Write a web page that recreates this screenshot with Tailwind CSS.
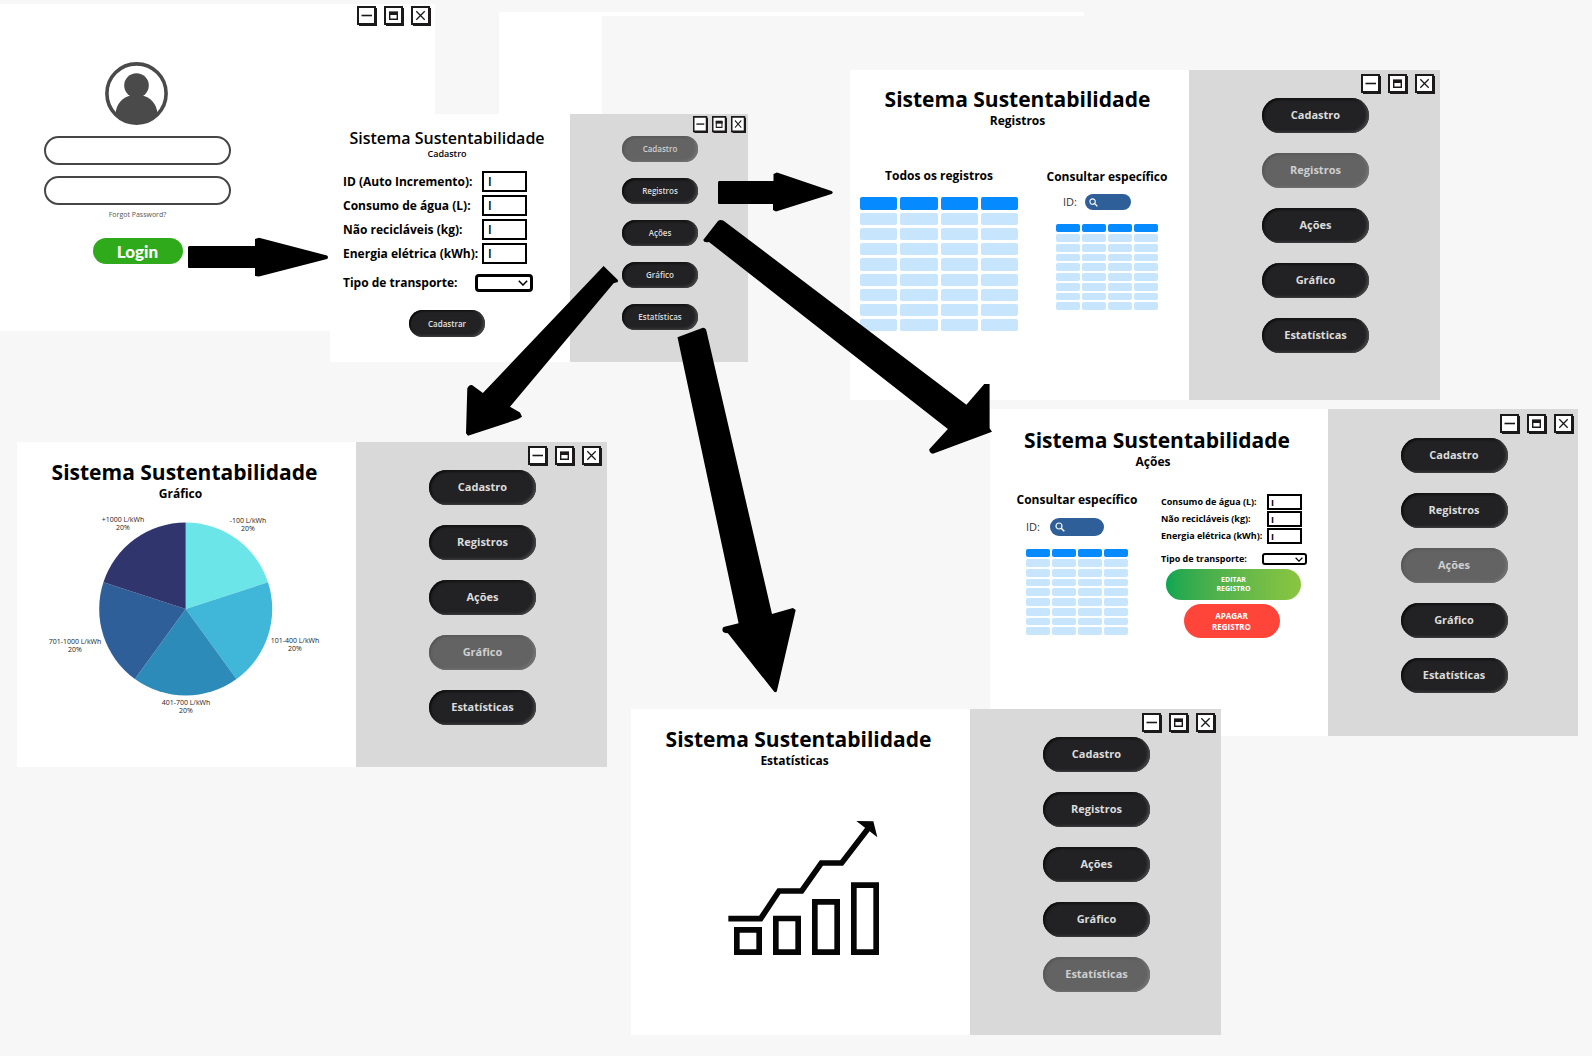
<!DOCTYPE html>
<html lang="pt-BR">
<head>
<meta charset="utf-8">
<meta name="viewport" content="width=device-width, initial-scale=1">
<title>Sistema Sustentabilidade</title>
<script src="https://cdn.jsdelivr.net/npm/@tailwindcss/browser@4"></script>
</head>
<body class="bg-[#f7f7f7] font-['Open_Sans','Noto_Sans',sans-serif] text-black">
<svg class="hidden" aria-hidden="true">
  <symbol id="i-min" viewBox="0 0 20 20" preserveAspectRatio="none"><path d="M2 2H20V20H2z" fill="#1c191b"/><path d="M1 1H18V18H1z" fill="#fff" stroke="#1c191b" stroke-width="2"/><path d="M4.500 9.500H15" stroke="#1c191b" stroke-width="1.600"/></symbol>
  <symbol id="i-max" viewBox="0 0 20 20" preserveAspectRatio="none"><path d="M2 2H20V20H2z" fill="#1c191b"/><path d="M1 1H18V18H1z" fill="#fff" stroke="#1c191b" stroke-width="2"/><path d="M5.700 6.500H13.300V13.300H5.700z" fill="#fff" stroke="#1c191b" stroke-width="1.400"/><path d="M5 5.500H14V9H5z" fill="#1c191b"/></symbol>
  <symbol id="i-close" viewBox="0 0 20 20" preserveAspectRatio="none"><path d="M2 2H20V20H2z" fill="#1c191b"/><path d="M1 1H18V18H1z" fill="#fff" stroke="#1c191b" stroke-width="2"/><path d="M5.300 5.300L13.700 13.700M13.700 5.300L5.300 13.700" stroke="#1c191b" stroke-width="1.300"/></symbol>
  <symbol id="i-search" viewBox="0 0 10 10"><circle cx="4" cy="4" r="3" fill="none" stroke="#fff" stroke-width="1.200"/><path d="M6.200 6.200L9.300 9.300" stroke="#fff" stroke-width="1.500"/></symbol>
  <symbol id="i-chevron" viewBox="0 0 10 6"><path d="M.8.800L5 5L9.200.800" fill="none" stroke="#000" stroke-width="1.500"/></symbol>
</svg>

<main class="relative min-h-screen overflow-hidden">
  <div class="absolute left-[499px] top-3 h-1 w-[585px] bg-white"></div>
  <div class="absolute left-[499px] top-3 h-[104px] w-[103px] bg-white"></div>

  <!-- Login -->
  <section class="absolute left-0 top-1 flex h-[327px] w-[435px] justify-between bg-white">
    <form class="flex w-[275px] flex-col items-center pt-[58px]">
      <svg class="mr-0.5 size-[63px]" viewBox="0 0 63 63" role="img" aria-label="Usuário">
        <clipPath id="face"><circle cx="31.500" cy="31.500" r="30"/></clipPath>
        <g clip-path="url(#face)" fill="#4a4a4a"><circle cx="31.500" cy="23.500" r="12.300"/><path d="M10.500 52C11 42 18 34.500 26 33.500H37C45 34.500 52 42 52.500 52L44 63H19z"/></g>
        <circle cx="31.500" cy="31.500" r="29.600" fill="none" stroke="#4a4a4a" stroke-width="3.600"/>
      </svg>
      <input type="text" aria-label="Usuário" class="mt-[11px] h-[29px] w-[187px] rounded-full border-2 border-[#464646] bg-white px-3 text-xs">
      <input type="password" aria-label="Senha" class="mt-[11px] h-[29px] w-[187px] rounded-full border-2 border-[#464646] bg-white px-3 text-xs">
      <a href="#" class="mt-[5px] text-[7px] leading-[10px] text-[#555]">Forgot Password?</a>
      <button type="button" class="mt-[18px] h-[26px] w-[90px] rounded-full bg-[#2eaa1a] font-['Lato',sans-serif] text-[17px] leading-none font-black text-white">Login</button>
    </form>
    <div data-controls="lg" class="flex gap-[7px] pt-0.5 pr-1"></div>
  </section>

  <!-- Cadastro -->
  <section class="absolute left-[330px] top-[114px] flex h-[248px] w-[418px] bg-white">
    <form class="flex w-[240px] flex-col pt-3.5 pl-[13px]">
      <h1 class="pr-[19px] text-center text-base leading-5 font-semibold">Sistema Sustentabilidade</h1>
      <h2 class="pr-[19px] text-center text-[9px] leading-3 font-semibold">Cadastro</h2>
      <div class="mt-[11px] flex flex-col gap-[3px] text-xs font-bold whitespace-nowrap">
        <div class="flex items-center"><label for="c1" class="w-[139px]">ID (Auto Incremento):</label><input id="c1" value="I" class="h-[21px] w-[45px] border-2 bg-white px-1 font-semibold"></div>
        <div class="flex items-center"><label for="c2" class="w-[139px]">Consumo de água (L):</label><input id="c2" value="I" class="h-[21px] w-[45px] border-2 bg-white px-1 font-semibold"></div>
        <div class="flex items-center"><label for="c3" class="w-[139px]">Não recicláveis (kg):</label><input id="c3" value="I" class="h-[21px] w-[45px] border-2 bg-white px-1 font-semibold"></div>
        <div class="flex items-center"><label for="c4" class="w-[139px]">Energia elétrica (kWh):</label><input id="c4" value="I" class="h-[21px] w-[45px] border-2 bg-white px-1 font-semibold"></div>
      </div>
      <div class="mt-2.5 flex items-center text-xs font-bold whitespace-nowrap">
        <label for="c5" class="w-[132px] leading-[18px]">Tipo de transporte:</label>
        <div class="relative flex"><select id="c5" class="h-[18px] w-[58px] appearance-none rounded-[4px] border-[3px] bg-white"></select><svg class="pointer-events-none absolute top-1.5 right-[5px] h-1.5 w-2.5"><use href="#i-chevron"/></svg></div>
      </div>
      <button type="button" class="mt-[18px] ml-[66px] h-[27px] w-[76px] rounded-full bg-[#222224] text-[8px] font-semibold text-[#e3e3e3] shadow-[inset_-2px_-1px_3px_#48484a,inset_1px_1px_2px_#000]">Cadastrar</button>
    </form>
    <aside class="flex flex-1 flex-col items-center bg-[#d9d9d9]">
      <div data-controls="sm" class="flex gap-1 self-end pt-0.5 pr-0.5"></div>
      <nav data-nav="sm" data-current="Cadastro" class="mt-[3px] flex flex-col gap-4 pl-0.5"></nav>
    </aside>
  </section>

  <!-- Registros -->
  <section class="absolute left-[850px] top-[70px] flex h-[330px] w-[590px] bg-white">
    <div class="w-[339px] pt-[15px]">
      <h1 class="pr-1 text-center text-[21px] leading-7 font-bold">Sistema Sustentabilidade</h1>
      <h2 class="pr-1 text-center text-xs leading-4 font-bold">Registros</h2>
      <div class="mt-[37px] flex gap-6 pl-[7px] whitespace-nowrap">
        <div>
          <h3 class="text-center text-xs leading-5 font-bold">Todos os registros</h3>
          <table data-grid="lg" aria-label="Todos os registros" class="mt-2 h-[140px] w-[164px] table-fixed border-separate border-spacing-[3px]"></table>
        </div>
        <div class="flex w-[124px] flex-col items-center">
          <h3 class="text-xs leading-[22px] font-bold">Consultar específico</h3>
          <div class="mt-1.5 flex items-center gap-2 self-start pl-[18px]">
            <label for="r1" class="text-[11px] leading-4 text-[#333]">ID:</label>
            <div class="relative flex"><input id="r1" type="search" class="h-4 w-[46px] rounded-full bg-[#2f5f98] pl-4 text-[9px] text-white"><svg class="pointer-events-none absolute top-1 left-1 size-[9px]"><use href="#i-search"/></svg></div>
          </div>
          <table data-grid="sm" aria-label="Registro consultado" class="mt-3 h-[90px] w-[106px] table-fixed border-separate border-spacing-[2px]"></table>
        </div>
      </div>
    </div>
    <aside class="flex flex-1 flex-col items-center bg-[#d9d9d9]">
      <div data-controls="lg" class="flex gap-[7px] self-end pt-1 pr-[5px]"></div>
      <nav data-nav="lg" data-current="Registros" class="mt-1 flex flex-col gap-5 pl-0.5"></nav>
    </aside>
  </section>

  <!-- Gráfico -->
  <section class="absolute left-[17px] top-[442px] flex h-[325px] w-[590px] bg-white">
    <div class="w-[339px] pt-4">
      <h1 class="pr-1 text-center text-[21px] leading-7 font-bold">Sistema Sustentabilidade</h1>
      <h2 class="pr-3 text-center text-xs leading-4 font-bold">Gráfico</h2>
      <svg class="h-[250px] w-full" viewBox="17 502 339 250" role="img" aria-label="Distribuição de consumo">
        <path d="M185.700 609V522.500A86.500 86.500 0 0 1 268 582.300z" fill="#6be5e8"/>
        <path d="M185.700 609L268 582.300A86.500 86.500 0 0 1 236.500 679z" fill="#40b7d8"/>
        <path d="M185.700 609L236.500 679A86.500 86.500 0 0 1 134.900 679z" fill="#2d8bba"/>
        <path d="M185.700 609L134.900 679A86.500 86.500 0 0 1 103.400 582.300z" fill="#2f5f98"/>
        <path d="M185.700 609L103.400 582.300A86.500 86.500 0 0 1 185.700 522.500z" fill="#31356e"/>
        <g class="text-[7px]" text-anchor="middle" fill="#222">
          <text x="123" y="522">+1000 L/kWh</text><text x="123" y="530">20%</text>
          <text x="248" y="523">-100 L/kWh</text><text x="248" y="531">20%</text>
          <text x="295" y="643">101-400 L/kWh</text><text x="295" y="651">20%</text>
          <text x="186" y="705">401-700 L/kWh</text><text x="186" y="713">20%</text>
          <text x="75" y="644">701-1000 L/kWh</text><text x="75" y="652">20%</text>
        </g>
      </svg>
    </div>
    <aside class="flex flex-1 flex-col items-center bg-[#d9d9d9]">
      <div data-controls="lg" class="flex gap-[7px] self-end pt-1 pr-[5px]"></div>
      <nav data-nav="lg" data-current="Gráfico" class="mt-1 flex flex-col gap-5 pl-0.5"></nav>
    </aside>
  </section>

  <!-- Ações -->
  <section class="absolute left-[990px] top-[409px] flex h-[327px] w-[588px] bg-white">
    <div class="w-[338px] pt-[17px]">
      <h1 class="pr-1 text-center text-[21px] leading-7 font-bold">Sistema Sustentabilidade</h1>
      <h2 class="pr-3 text-center text-xs leading-4 font-bold">Ações</h2>
      <div class="mt-5 flex gap-[22px] pl-[25px] whitespace-nowrap">
        <div class="flex w-[124px] flex-col items-center">
          <h3 class="text-xs leading-5 font-bold">Consultar específico</h3>
          <div class="mt-2 flex items-center gap-2.5 self-start pl-[11px]">
            <label for="a0" class="text-[11px] leading-4 text-[#333]">ID:</label>
            <div class="relative flex"><input id="a0" type="search" class="h-[18px] w-[54px] rounded-full bg-[#2f5f98] pl-4 text-[9px] text-white"><svg class="pointer-events-none absolute top-1 left-[5px] size-2.5"><use href="#i-search"/></svg></div>
          </div>
          <table data-grid="sm" aria-label="Registro consultado" class="mt-[11px] h-[90px] w-[106px] table-fixed border-separate border-spacing-[2px]"></table>
        </div>
        <form class="w-[146px] pt-1 text-[9px] font-bold">
          <div class="flex flex-col gap-px">
            <div class="flex items-center"><label for="a1" class="w-[106px]">Consumo de água (L):</label><input id="a1" value="I" class="h-4 w-[35px] border-2 bg-white px-0.5 leading-none"></div>
            <div class="flex items-center"><label for="a2" class="w-[106px]">Não recicláveis (kg):</label><input id="a2" value="I" class="h-4 w-[35px] border-2 bg-white px-0.5 leading-none"></div>
            <div class="flex items-center"><label for="a3" class="w-[106px]">Energia elétrica (kWh):</label><input id="a3" value="I" class="h-4 w-[35px] border-2 bg-white px-0.5 leading-none"></div>
          </div>
          <div class="mt-2 flex items-center">
            <label for="a4" class="w-[101px]">Tipo de transporte:</label>
            <div class="relative flex"><select id="a4" class="h-3 w-[45px] appearance-none rounded-[3px] border-2 bg-white"></select><svg class="pointer-events-none absolute top-1 right-1 h-[5px] w-2"><use href="#i-chevron"/></svg></div>
          </div>
          <div class="mt-[3px] flex w-[145px] flex-col items-center gap-1 text-white">
            <button type="button" class="h-[31px] w-[135px] rounded-full bg-linear-to-r from-[#07a651] to-[#8bc540] text-[7px] leading-[9px]">EDITAR<br>REGISTRO</button>
            <button type="button" class="mr-1 h-[34px] w-24 rounded-full bg-[#ff453a] text-[8px] leading-[11px]">APAGAR<br>REGISTRO</button>
          </div>
        </form>
      </div>
    </div>
    <aside class="flex flex-1 flex-col items-center bg-[#d9d9d9]">
      <div data-controls="lg" class="flex gap-[7px] self-end pt-[5px] pr-1"></div>
      <nav data-nav="lg" data-current="Ações" class="mt-1 flex flex-col gap-5 pl-0.5"></nav>
    </aside>
  </section>

  <!-- Estatísticas -->
  <section class="absolute left-[631px] top-[709px] flex h-[326px] w-[590px] bg-white">
    <div class="w-[339px] pt-4">
      <h1 class="pr-1 text-center text-[21px] leading-7 font-bold">Sistema Sustentabilidade</h1>
      <h2 class="pr-3 text-center text-xs leading-4 font-bold">Estatísticas</h2>
      <svg class="mt-[51px] ml-[97px] h-[136px] w-[151px]" viewBox="324 360 453 408" role="img" aria-label="Gráfico em crescimento">
        <g fill="none" stroke="#060606" stroke-width="17">
          <path d="M325 656H422L477 573H545L604 489H665L745 385"/>
          <path d="M350.500 689.500H417.500V756.500H350.500zM467.500 655.500H534.500V756.500H467.500zM584.500 605.500H651.500V756.500H584.500zM701.500 555.500H768.500V756.500H701.500z"/>
        </g>
        <path d="M709 363L760 364L772 412L749 394L736 384z" fill="#060606"/>
      </svg>
    </div>
    <aside class="flex flex-1 flex-col items-center bg-[#d9d9d9]">
      <div data-controls="lg" class="flex gap-[7px] self-end pt-1 pr-[5px]"></div>
      <nav data-nav="lg" data-current="Estatísticas" class="mt-1 flex flex-col gap-5 pl-0.5"></nav>
    </aside>
  </section>

  <!-- Flow arrows between the screens -->
  <svg class="pointer-events-none absolute top-0 left-0 h-[1056px] w-[1592px]" viewBox="0 0 1592 1056" aria-hidden="true">
    <path d="M189 246H255V239L259 237.700L327 255.500Q329 257 327 259L259 276.500L255 276V268H189Q188 268 188 267V247z"/>
    <path d="M719 181H773.500V174L777 172.500L831.500 191Q834 192.500 831.500 194L776 211.500L773 210V204H719Q718 204 718 203V182z"/>
    <path d="M718 221Q720 219 723.600 220.700L966.400 404.700L984.300 384H989.600V428.300L992 431.700L932.900 453.700Q929 453 929.300 449.300L947.900 429L709 242Q704 243 703.200 240z"/>
    <path d="M603.600 266L617.900 280V282L613.600 283.300L510 406.700L520 412.500L522 416.700L517.900 419.300L468 435.700L466 433.300L467.300 388.300Q469 384.500 472 385L482.900 393z"/>
    <path d="M677.500 337.300L702.900 327.700Q706 328 706.400 330.700L772 614L792.900 608L795.700 610L776.800 691.500Q775 693 774 691.500L727.900 633.300Q723 633 722.500 630.700Q722 627 724.500 626.700L738.600 623.300z"/>
  </svg>
</main>

<script>
const controls = {
  lg: 'block size-5',
  sm: 'block h-[17px] w-[15px]',
};
for (const bar of document.querySelectorAll('[data-controls]')) {
  bar.innerHTML = [['min', 'Minimizar'], ['max', 'Maximizar'], ['close', 'Fechar']]
    .map(([id, name]) => `<button type="button" aria-label="${name}" class="self-start"><svg class="${controls[bar.dataset.controls]}"><use href="#i-${id}"/></svg></button>`)
    .join('');
}
const size = {
  lg: 'h-[35px] w-[107px] text-[11px] font-bold',
  sm: 'h-[26px] w-[76px] text-[8px] font-semibold',
};
const idle = 'bg-[#222224] text-[#dcdcdc] shadow-[inset_-2px_-1px_3px_#48484a,inset_1px_1px_3px_#000]';
const active = 'bg-[#636363] text-[#cfcfcf] shadow-[inset_-2px_-1px_3px_#757575,inset_1px_1px_3px_#505050]';
for (const nav of document.querySelectorAll('[data-nav]')) {
  nav.innerHTML = ['Cadastro', 'Registros', 'Ações', 'Gráfico', 'Estatísticas']
    .map(t => `<button type="button" class="rounded-full ${size[nav.dataset.nav]} ${t === nav.dataset.current ? active : idle}">${t}</button>`)
    .join('');
}
const headHeight = { lg: 'h-[13px]', sm: 'h-2' };
for (const grid of document.querySelectorAll('[data-grid]')) {
  const head = `<th class="${headHeight[grid.dataset.grid]} rounded-[2px] bg-[#058aff] p-0"></th>`.repeat(4);
  const row = '<tr>' + '<td class="rounded-[2px] bg-[#c7e5fc] p-0"></td>'.repeat(4) + '</tr>';
  grid.innerHTML = `<thead><tr>${head}</tr></thead><tbody>${row.repeat(8)}</tbody>`;
}
</script>
</body>
</html>
